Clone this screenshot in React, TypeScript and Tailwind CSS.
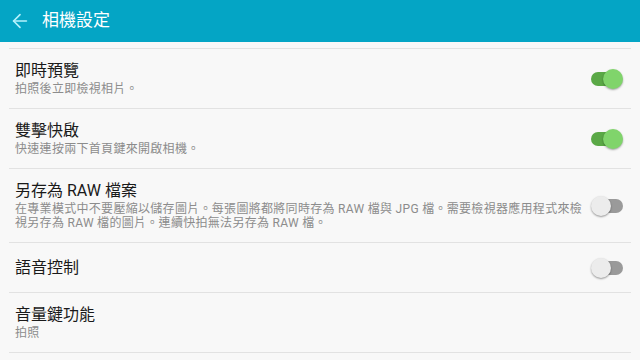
import { ArrowLeft } from "lucide-react";

type Setting = {
  title: string;
  summary?: string;
  checked?: boolean;
};

const settings: Setting[] = [
  { title: "即時預覽", summary: "拍照後立即檢視相片。", checked: true },
  { title: "雙擊快啟", summary: "快速連按兩下首頁鍵來開啟相機。", checked: true },
  {
    title: "另存為 RAW 檔案",
    summary:
      "在專業模式中不要壓縮以儲存圖片。每張圖將都將同時存為 RAW 檔與 JPG 檔。需要檢視器應用程式來檢視另存為 RAW 檔的圖片。連續快拍無法另存為 RAW 檔。",
    checked: false,
  },
  { title: "語音控制", checked: false },
  { title: "音量鍵功能", summary: "拍照" },
];

function Toggle({ checked }: { checked: boolean }) {
  if (checked) {
    return (
      <div className="relative h-[20px] w-[32px] shrink-0">
        <div className="absolute left-0 top-[3px] h-[14px] w-[26px] rounded-full bg-[#5aa846]" />
        <div className="absolute right-0 top-0 h-[20px] w-[20px] rounded-full bg-[#80d46b] shadow-[0_1px_2px_rgba(0,0,0,0.35)]" />
      </div>
    );
  }
  return (
    <div className="relative h-[20px] w-[32px] shrink-0">
      <div className="absolute right-0 top-[3px] h-[14px] w-[26px] rounded-full bg-[#9a9a9a]" />
      <div className="absolute left-0 top-0 h-[20px] w-[20px] rounded-full bg-[#ececec] shadow-[0_1px_2px_rgba(0,0,0,0.4)]" />
    </div>
  );
}

export default function App() {
  return (
    <div
      className="h-[360px] w-[640px] overflow-hidden bg-[#f8f8f8]"
      style={{ fontFamily: 'Roboto, "Noto Sans CJK TC", sans-serif' }}
    >
      <header className="flex h-[42px] items-center bg-[#04a5c5] pl-[9px]">
        <ArrowLeft size={22} strokeWidth={1.8} className="text-[#b5f1fb]" />
        <h1 className="ml-[11px] text-[17px] text-white">相機設定</h1>
      </header>

      <div className="px-[9px] pt-[6px]">
        <div className="border-t border-[#e2e2e2]" />
        {settings.map((s) => (
          <div
            key={s.title}
            className={`flex items-center border-b border-[#e2e2e2] pl-[6px] pr-[8px] ${
              s.summary ? "py-[12px]" : "min-h-[50px]"
            }`}
          >
            <div className="w-[569px] shrink-0">
              <p className="text-[16px] leading-[20px] text-[#1a1a1a]">{s.title}</p>
              {s.summary && (
                <p className="mt-[1px] text-[12px] leading-[14px] tracking-[0.3px] text-[#8c8c8c]">
                  {s.summary}
                </p>
              )}
            </div>
            {s.checked !== undefined && (
              <div className="ml-[7px]">
                <Toggle checked={s.checked} />
              </div>
            )}
          </div>
        ))}
      </div>
    </div>
  );
}
